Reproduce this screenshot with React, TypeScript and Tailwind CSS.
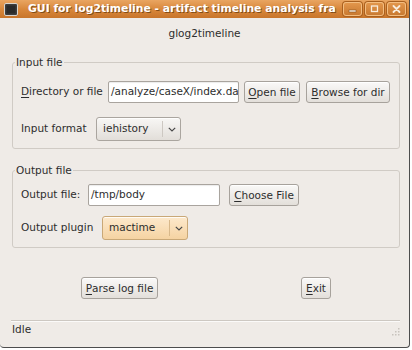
const FONT = "font-['DejaVu_Sans','Liberation_Sans',sans-serif]";

function Mnemonic({ letter, rest }: { letter: string; rest: string }) {
  return (
    <>
      <span className="underline decoration-1 underline-offset-[2px]">{letter}</span>
      {rest}
    </>
  );
}

function PushButton({ letter, rest, width }: { letter: string; rest: string; width: string }) {
  return (
    <button
      type="button"
      className={`flex h-[22px] ${width} items-center justify-center whitespace-nowrap rounded-[3px] border border-[#a7a29c] bg-gradient-to-b from-[#faf9f8] to-[#e3dfda] text-[10.5px] leading-none text-[#2d2d2d] shadow-[inset_0_1px_0_#ffffff]`}
    >
      <Mnemonic letter={letter} rest={rest} />
    </button>
  );
}

function Chevron() {
  return (
    <svg width="8" height="5" viewBox="0 0 8 5">
      <path d="M0.8 0.8 L4 4 L7.2 0.8" fill="none" stroke="#4a4a4a" strokeWidth="1.2" />
    </svg>
  );
}

function Combo({ value, width, hot }: { value: string; width: string; hot?: boolean }) {
  const look = hot
    ? 'border-[#c9a877] from-[#fde9cc] to-[#f5d3a2]'
    : 'border-[#aaa59f] from-[#f8f7f5] to-[#e2ded9]';
  return (
    <div
      className={`flex h-[24px] ${width} items-center rounded-[3px] border bg-gradient-to-b ${look} shadow-[inset_0_1px_0_rgba(255,255,255,0.8)]`}
    >
      <span className="flex-1 pl-[6px] text-[10.5px] text-[#2d2d2d]">{value}</span>
      <span className={`h-[16px] w-px ${hot ? 'bg-[#d8b88a]' : 'bg-[#cdc8c2]'}`} />
      <span className="flex w-[17px] justify-center">
        <Chevron />
      </span>
    </div>
  );
}

function Entry({ value, width }: { value: string; width: string }) {
  return (
    <div
      className={`flex h-[22px] ${width} items-center overflow-hidden whitespace-nowrap rounded-[2px] border border-[#a9a49e] bg-white pl-[2px] text-[10.5px] text-[#2d2d2d] shadow-[inset_0_1px_1px_rgba(0,0,0,0.08)]`}
    >
      {value}
    </div>
  );
}

function Frame({ title, children, className }: { title: string; children: React.ReactNode; className: string }) {
  return (
    <fieldset className={`ml-[12px] w-[388px] rounded-[3px] border border-[#d0cbc5] p-0 px-0 ${className}`}>
      <legend className="ml-[2px] px-[1px] text-[10.5px] leading-[13px] text-[#2d2d2d]">{title}</legend>
      {children}
    </fieldset>
  );
}

function TitleButton({ kind }: { kind: 'min' | 'max' | 'close' }) {
  return (
    <div className="flex h-[14px] w-[19px] items-center justify-center rounded-[3px] border border-[#f3bd80] bg-gradient-to-b from-[#e2964b] to-[#c97a31] shadow-[0_0_0_1px_#a9601f]">
      <svg width="9" height="8" viewBox="0 0 9 8">
        {kind === 'min' && <rect x="1" y="5" width="7" height="2" fill="#f7ecdd" stroke="#7a4414" strokeWidth="0.5" />}
        {kind === 'max' && (
          <rect x="1.5" y="1" width="6" height="5.5" fill="none" stroke="#f7ecdd" strokeWidth="1.3" />
        )}
        {kind === 'close' && (
          <path d="M1.5 1 L7.5 7 M7.5 1 L1.5 7" stroke="#f7ecdd" strokeWidth="1.8" strokeLinecap="round" />
        )}
      </svg>
    </div>
  );
}

export default function App() {
  return (
    <div className={`h-[350px] w-[412px] bg-white ${FONT}`}>
      <div className="flex h-[348px] w-[410px] flex-col overflow-hidden rounded-b-[4px] border-r border-b border-[#4d4d4d] bg-[#efebe7]">
        {/* window manager title bar */}
        <div className="flex h-[18px] shrink-0 items-center bg-gradient-to-b from-[#e9a561] via-[#d9883b] to-[#c8752b]">
          <svg className="ml-[4px] shrink-0" width="14" height="13" viewBox="0 0 14 13">
            <rect x="0.5" y="0.5" width="13" height="12" rx="1.5" fill="#3d3d3d" stroke="#d9d4ce" />
            <rect x="2.5" y="2.5" width="9" height="8" fill="#2a2a2a" />
          </svg>
          <span className="ml-[10px] shrink-0 whitespace-nowrap text-[10.8px] font-bold leading-none text-white [text-shadow:1px_1px_0_rgba(60,30,0,0.55)]">
            GUI for log2timeline - artifact timeline analysis fra
          </span>
          <div className="mr-[3px] ml-auto flex shrink-0 gap-[3px]">
            <TitleButton kind="min" />
            <TitleButton kind="max" />
            <TitleButton kind="close" />
          </div>
        </div>

        <div className="mt-[8px] h-[14px] text-center text-[10.5px] leading-[14px] text-[#2d2d2d]">glog2timeline</div>

        <Frame title="Input file" className="mt-[16px] pt-[12px] pb-[7px]">
          <div className="flex h-[22px] items-center pl-[8px]">
            <span className="w-[87px] text-[10.5px] text-[#2d2d2d]">
              <Mnemonic letter="D" rest="irectory or file" />
            </span>
            <Entry value="/analyze/caseX/index.da" width="w-[131px]" />
            <div className="ml-[5px]">
              <PushButton letter="O" rest="pen file" width="w-[56px]" />
            </div>
            <div className="ml-[6px]">
              <PushButton letter="B" rest="rowse for dir" width="w-[84px]" />
            </div>
          </div>
          <div className="mt-[14px] flex items-center pl-[8px]">
            <span className="w-[75px] text-[10.5px] text-[#2d2d2d]">Input format</span>
            <Combo value="iehistory" width="w-[85px]" />
          </div>
        </Frame>

        <Frame title="Output file" className="mt-[15px] pt-[7px] pb-[7px]">
          <div className="flex h-[22px] items-center pl-[8px]">
            <span className="w-[67px] text-[10.5px] text-[#2d2d2d]">Output file:</span>
            <Entry value="/tmp/body" width="w-[132px]" />
            <div className="ml-[9px]">
              <PushButton letter="C" rest="hoose File" width="w-[70px]" />
            </div>
          </div>
          <div className="mt-[10px] flex items-center pl-[8px]">
            <span className="w-[81px] text-[10.5px] text-[#2d2d2d]">Output plugin</span>
            <Combo value="mactime" width="w-[86px]" hot />
          </div>
        </Frame>

        <div className="mt-[29px] flex pl-[81px]">
          <PushButton letter="P" rest="arse log file" width="w-[77px]" />
          <div className="ml-[143px]">
            <PushButton letter="E" rest="xit" width="w-[30px]" />
          </div>
        </div>

        <div className="mt-[21px] ml-[11px] w-[389px] border-t border-[#cdc8c2] shadow-[0_1px_0_#fbfaf9]" />

        <div className="mt-[1px] flex h-[14px] items-center justify-between pl-[12px] pr-[9px]">
          <span className="text-[10.5px] leading-[14px] text-[#2d2d2d]">Idle</span>
          <svg className="mt-[6px]" width="8" height="8" viewBox="0 0 8 8">
            <rect x="6" y="0" width="1.5" height="1.5" fill="#c8c3bd" />
            <rect x="3" y="3" width="1.5" height="1.5" fill="#c8c3bd" />
            <rect x="6" y="3" width="1.5" height="1.5" fill="#c8c3bd" />
            <rect x="0" y="6" width="1.5" height="1.5" fill="#c8c3bd" />
            <rect x="3" y="6" width="1.5" height="1.5" fill="#c8c3bd" />
            <rect x="6" y="6" width="1.5" height="1.5" fill="#c8c3bd" />
          </svg>
        </div>
      </div>
    </div>
  );
}
